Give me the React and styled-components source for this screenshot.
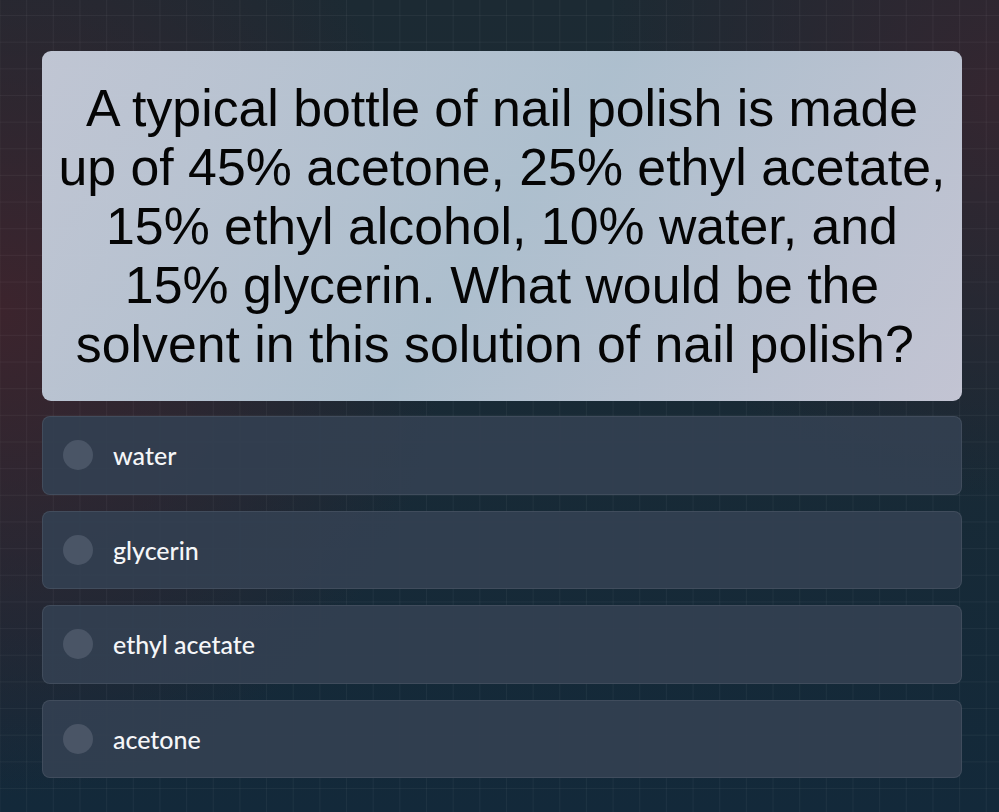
import React from "react";
import styled, { createGlobalStyle } from "styled-components";

const GlobalStyle = createGlobalStyle`
  html, body { margin: 0; padding: 0; }
  body {
    min-height: 100vh;
    background-color: #172a36;
    background-image:
      linear-gradient(to right, rgba(255,255,255,0.045) 1px, transparent 1px),
      linear-gradient(to bottom, rgba(255,255,255,0.045) 1px, transparent 1px),
      radial-gradient(ellipse 45% 60% at 0% 38%, rgba(60,36,45,1) 0%, rgba(60,36,45,0) 100%),
      radial-gradient(ellipse 40% 50% at 100% 12%, rgba(52,38,48,1) 0%, rgba(52,38,48,0) 100%),
      linear-gradient(180deg, #1c2a33 0%, #192a35 45%, #13293a 100%);
    background-size: 26.67px 26.67px, 26.67px 26.67px, 100% 100%, 100% 100%, 100% 100%;
    background-position: -0.5px 15px, -0.5px 15px, 0 0, 0 0, 0 0;
    background-repeat: repeat, repeat, no-repeat, no-repeat, no-repeat;
  }
  #root { min-height: 100vh; }
`;

const Page = styled.main`
  box-sizing: border-box;
  min-height: 100vh;
  padding: 51px 37px 30px 42px;
  display: flex;
  flex-direction: column;
`;

const QuestionCard = styled.section`
  box-sizing: border-box;
  width: 920px;
  padding: 28px 15px 27px;
  border-radius: 9px;
  background: linear-gradient(
    125deg,
    rgba(200, 206, 220, 0.95) 0%,
    rgba(181, 199, 214, 0.95) 50%,
    rgba(203, 204, 219, 0.95) 100%
  );
  margin-bottom: 15px;
`;

const QuestionText = styled.h1`
  margin: 0;
  font-family: "Liberation Sans", Arial, sans-serif;
  font-weight: 400;
  font-size: 51.8px;
  line-height: 59px;
  color: #050505;
  text-align: center;
`;

const OptionList = styled.div`
  display: flex;
  flex-direction: column;
  gap: 16px;
  width: 920px;
`;

const Option = styled.button`
  box-sizing: border-box;
  height: 78.5px;
  display: flex;
  align-items: center;
  gap: 20px;
  padding: 0 20px;
  border: 1px solid rgba(255, 255, 255, 0.08);
  border-radius: 8px;
  background: rgba(51, 63, 81, 0.93);
  cursor: pointer;
  text-align: left;
`;

const Radio = styled.span`
  flex: none;
  width: 30px;
  height: 30px;
  border-radius: 50%;
  background: #4a5566;
`;

const OptionLabel = styled.span`
  font-family: Lato, "Noto Sans", sans-serif;
  font-weight: 500;
  font-size: 25px;
  color: #f5f6f8;
`;

const options = ["water", "glycerin", "ethyl acetate", "acetone"];

export default function App() {
  return (
    <>
      <GlobalStyle />
      <Page>
        <QuestionCard>
          <QuestionText>
            A typical bottle of nail polish is made up of 45% acetone, 25% ethyl
            acetate, 15% ethyl alcohol, 10% water, and 15% glycerin. What would
            be the solvent in this solution of nail polish?{"\u00a0"}
          </QuestionText>
        </QuestionCard>
        <OptionList>
          {options.map((o) => (
            <Option key={o} type="button">
              <Radio />
              <OptionLabel>{o}</OptionLabel>
            </Option>
          ))}
        </OptionList>
      </Page>
    </>
  );
}
